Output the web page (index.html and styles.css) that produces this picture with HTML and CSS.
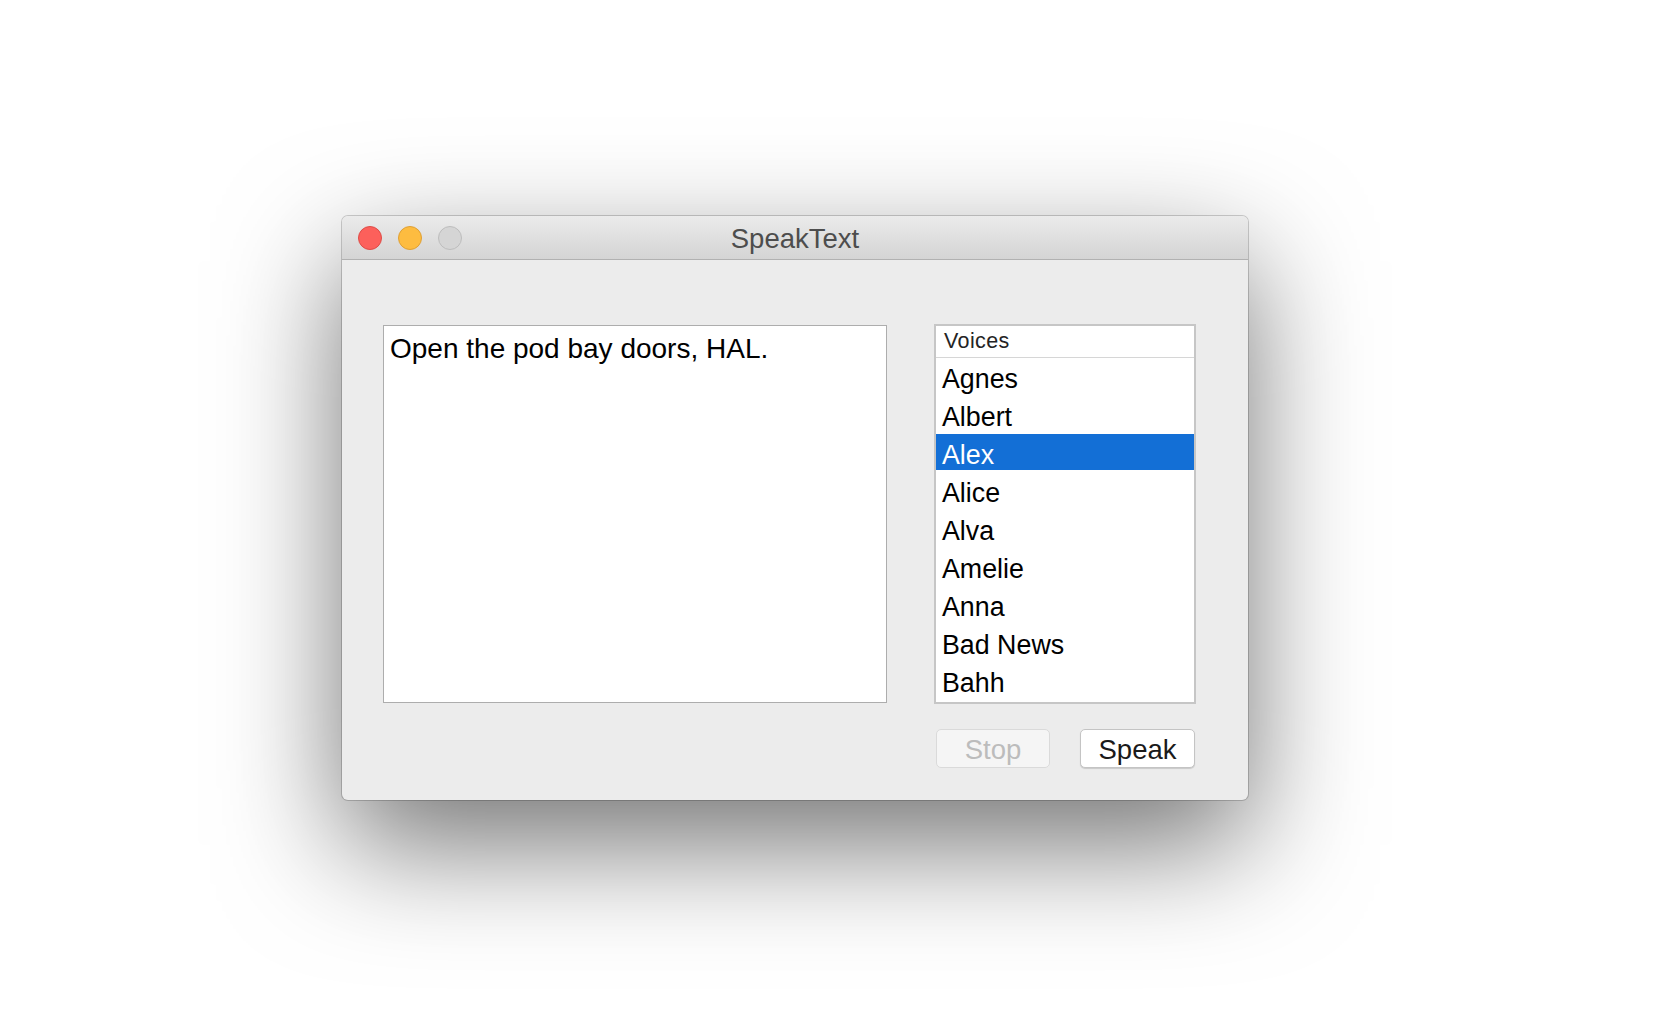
FILE: index.html
```html
<!DOCTYPE html>
<html>
<head>
<meta charset="utf-8">
<title>SpeakText</title>
<link rel="stylesheet" href="styles.css">
</head>
<body>
<div class="desk">
  <div class="window">
    <div class="titlebar">
      <div class="lights">
        <span class="light close"></span>
        <span class="light min"></span>
        <span class="light zoom"></span>
      </div>
      <div class="title">SpeakText</div>
    </div>
    <div class="content">
      <div class="main">
        <div class="textbox">Open the pod bay doors, HAL.</div>
        <div class="list">
          <div class="list-head">Voices</div>
          <div class="rows">
            <div class="row">Agnes</div>
            <div class="row">Albert</div>
            <div class="row selected">Alex</div>
            <div class="row">Alice</div>
            <div class="row">Alva</div>
            <div class="row">Amelie</div>
            <div class="row">Anna</div>
            <div class="row">Bad News</div>
            <div class="row">Bahh</div>
          </div>
        </div>
      </div>
      <div class="buttons">
        <div class="btn disabled">Stop</div>
        <div class="btn primary">Speak</div>
      </div>
    </div>
  </div>
</div>
</body>
</html>
```

FILE: styles.css
```css
html, body {
  margin: 0;
  padding: 0;
  background: #ffffff;
}
body {
  width: 1664px;
  height: 1028px;
  overflow: hidden;
  font-family: "Liberation Sans", Arial, Helvetica, sans-serif;
}
.desk {
  padding: 216px 0 0 342px;
}
.window {
  width: 906px;
  height: 584px;
  border-radius: 6px;
  overflow: hidden;
  background: #ececec;
  box-shadow: 0 0 0 1px rgba(0,0,0,0.18), 0 45px 120px rgba(0,0,0,0.55);
  display: flex;
  flex-direction: column;
}
.titlebar {
  position: relative;
  height: 44px;
  box-sizing: border-box;
  border-bottom: 1px solid #b1b1b1;
  background: linear-gradient(#ebebeb, #d4d4d4);
  display: flex;
  align-items: center;
  justify-content: center;
}
.lights {
  position: absolute;
  left: 16px;
  top: 10px;
  display: flex;
  gap: 16px;
}
.light {
  width: 24px;
  height: 24px;
  box-sizing: border-box;
  border-radius: 50%;
}
.light.close { background: #fc605b; border: 1px solid #de4c47; }
.light.min { background: #fdbc40; border: 1px solid #dfa035; }
.light.zoom { background: #d5d5d5; border: 1px solid #bdbdbd; }
.title {
  font-size: 27.5px;
  color: #4d4d4d;
  line-height: 30px;
  margin-top: 3px;
}
.content {
  flex: 1;
  padding: 64px 52px 0 41px;
  display: flex;
  flex-direction: column;
}
.main {
  display: flex;
  gap: 47px;
}
.textbox {
  width: 504px;
  height: 378px;
  margin-top: 1px;
  box-sizing: border-box;
  border: 1px solid #adadad;
  background: #fff;
  font-size: 28px;
  line-height: 32px;
  padding: 7px 6px;
  color: #000;
}
.list {
  width: 262px;
  height: 380px;
  box-sizing: border-box;
  border: 2px solid #c6c6c6;
  background: #fff;
  overflow: hidden;
}
.list-head {
  height: 32px;
  box-sizing: border-box;
  border-bottom: 1px solid #d6d6d6;
  font-size: 21.5px;
  line-height: 24px;
  padding: 3px 8px 0;
  color: #242424;
  letter-spacing: 0.4px;
}
.row {
  height: 36px;
  margin-bottom: 2px;
  box-sizing: border-box;
  padding: 6px 6px 0;
  font-size: 26.8px;
  line-height: 30px;
  color: #000;
}
.row.selected {
  background: #136fd6;
  color: #fff;
}
.buttons {
  display: flex;
  justify-content: flex-end;
  gap: 30px;
  margin-top: 25px;
  padding-right: 1px;
}
.btn {
  height: 39px;
  box-sizing: border-box;
  border-radius: 5px;
  font-size: 27.5px;
  line-height: 35px;
  padding-top: 2px;
  text-align: center;
}
.btn.disabled {
  width: 114px;
  background: #f5f5f5;
  border: 1px solid #dadada;
  color: #bcbcbc;
}
.btn.primary {
  width: 115px;
  background: #fff;
  border: 1px solid #c4c4c4;
  box-shadow: 0 1px 1px rgba(0,0,0,0.15);
  color: #1a1a1a;
}
```
